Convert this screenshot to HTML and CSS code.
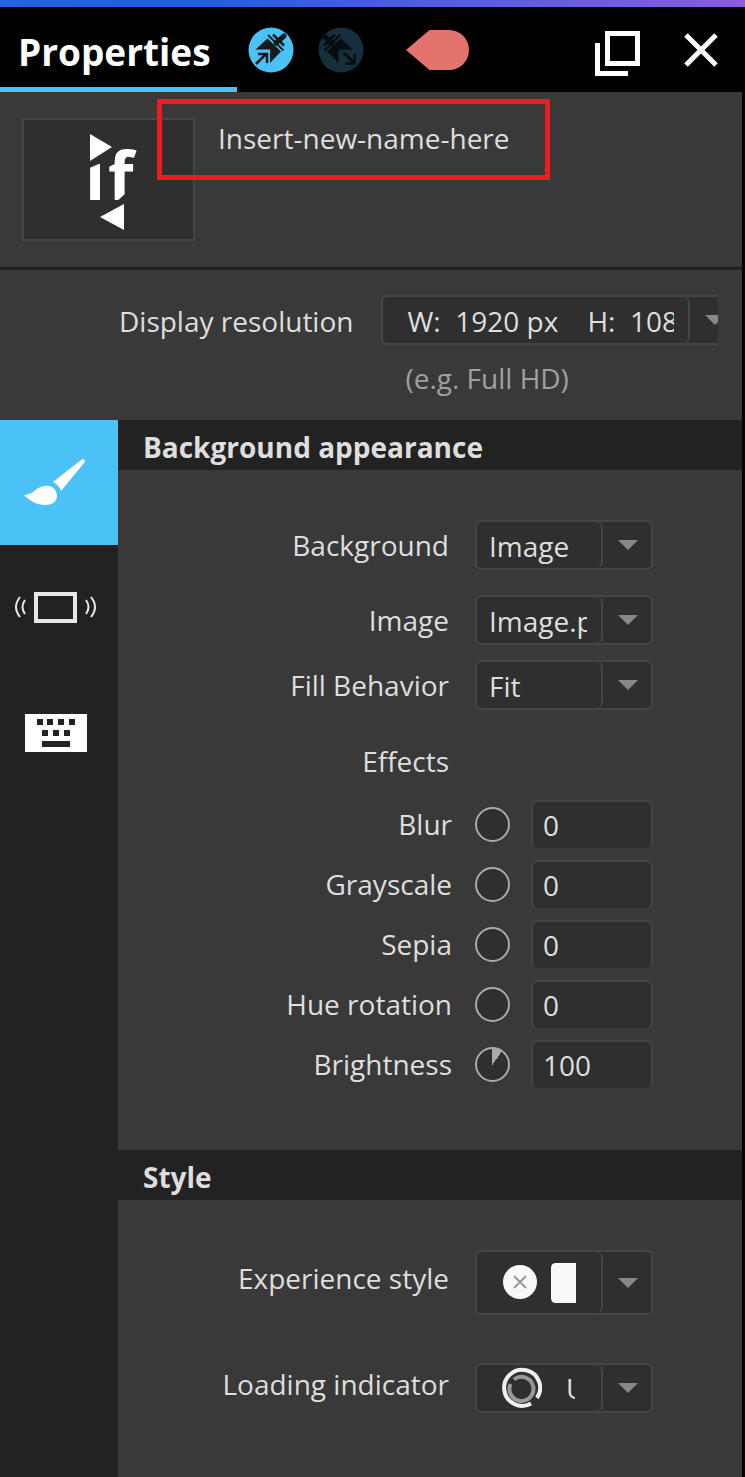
FILE: index.html
```html
<!DOCTYPE html>
<html lang="en">

<head>
    <meta charset="UTF-8">
    <meta name="viewport" content="width=device-width, initial-scale=1.0">
    <title>Properties</title>
    <link rel="stylesheet" href="styles.css">
</head>

<body>
    <header class="topbar">
        <h1 class="title">Properties</h1>
        <button class="icon-btn pin" aria-label="Pin">
            <svg width="46" height="46" viewBox="0 0 46 46">
                <circle cx="23" cy="23" r="22.5" fill="#4bc2f6" />
                <g fill="#161a1d" stroke="#161a1d">
                    <path d="M7.500 22.500L19.500 11.500L33 24.500L22 36V22.500z" stroke="none" />
                    <path d="M20 8l15.500 15.500" fill="none" stroke-width="2" />
                    <path d="M25 7.500l11 11" fill="none" stroke-width="2.500" />
                    <path d="M28 16l8-7" stroke-width="5" stroke-linecap="round" fill="none" />
                    <path d="M8 37l10-10M10 27h9v9" fill="none" stroke-width="2.500" />
                </g>
            </svg>
        </button>
        <button class="icon-btn unpin" aria-label="Unpin">
            <svg width="46" height="46" viewBox="0 0 46 46">
                <circle cx="23" cy="23" r="22.500" fill="#162f3c" />
                <g fill="#060c10" stroke="#060c10">
                    <path d="M34.500 22.500L22.500 11.500L9 24.500L20.500 36V22.500z" stroke="none" />
                    <path d="M22 8L6.500 23.500" fill="none" stroke-width="2" />
                    <path d="M17 7.500l-11 11" fill="none" stroke-width="2.500" />
                    <path d="M14 16L6 9" stroke-width="5" stroke-linecap="round" fill="none" />
                    <path d="M26 26l10 10M27 36.500h9.500V27" fill="none" stroke-width="2.500" />
                </g>
            </svg>
        </button>
        <button class="icon-btn tag" aria-label="Tag">
            <svg width="64" height="42" viewBox="0 0 64 42">
                <path d="M0 21L23.500 1H43a20 20 0 0 1 0 40H23.500z" fill="#e5736d" />
            </svg>
        </button>
        <button class="icon-btn float" aria-label="Float window">
            <svg width="46" height="46" viewBox="0 0 46 46" fill="none" stroke="#fff" stroke-width="5">
                <path d="M12.500 2.500h30v30h-30z" />
                <path d="M2.500 12v30.500H33" />
            </svg>
        </button>
        <button class="icon-btn" aria-label="Close">
            <svg width="34" height="34" viewBox="0 0 34 34" stroke="#fff" stroke-width="5">
                <path d="M2 2l30 30M32 2L2 32" />
            </svg>
        </button>
    </header>

    <main class="panel">
        <section class="identity">
            <div class="thumb">
                <svg width="60" height="106" viewBox="0 0 60 106" fill="#fff">
                    <!-- hides the dot of the i and bevels both stems -->
                    <clipPath id="cut">
                        <path d="M8 42L22 36h4V15h34v51H47L35 77H8z" />
                    </clipPath>
                    <path d="M11 7v27l22-14z" />
                    <text class="logo-text" x="6 29" y="73" clip-path="url(#cut)">if</text>
                    <path d="M45 77v26L21 90z" />
                </svg>
            </div>
            <div class="name">
                <input class="name-input" type="text" aria-label="Name" value="Insert-new-name-here">
            </div>
        </section>

        <section class="resolution">
            <label for="resolution">Display resolution</label>
            <div class="resolution-field">
                <div class="combo combo-wide">
                    <select id="resolution">
                        <option>W:&nbsp; 1920 px &nbsp;&nbsp; H:&nbsp; 1080 px</option>
                    </select>
                </div>
                <p class="hint">(e.g. Full HD)</p>
            </div>
        </section>

        <div class="columns">
            <nav class="tabs">
                <button class="tab active" aria-label="Appearance">
                    <svg width="64" height="50" viewBox="0 0 64 50" fill="#fff">
                        <path d="M0 37c10 0 12-9 21-9 7-1 12 4 12 10 0 6-5 9-12 9-8 0-15-4-21-10z" />
                        <path d="M29 24L57 2c2-2 6 0 3 3L37 33c-1-4-4-7-8-9z" />
                    </svg>
                </button>
                <button class="tab" aria-label="Display">
                    <svg width="84" height="34" viewBox="0 0 84 34" fill="none" stroke="#e8e8e8">
                        <path d="M22 3h39v27H22z" stroke-width="4" />
                        <path d="M6 6q-8 10 0 20M11 9q-5 7 0 14M77 6q8 10 0 20M72 9q5 7 0 14" stroke-width="2" />
                    </svg>
                </button>
                <button class="tab" aria-label="Keyboard">
                    <svg width="62" height="38" viewBox="0 0 62 38">
                        <path d="M0 0h62v38H0z" fill="#fff" />
                        <path d="M12 5h6v6h-6zM22 5h6v6h-6zM33 5h6v6h-6zM44 5h6v6h-6zM17 16h6v6h-6zM28 16h6v6h-6zM39 16h6v6h-6zM17 27h28v6H17z" fill="#222" />
                    </svg>
                </button>
            </nav>

            <div class="content">
                <h2>Background appearance</h2>
                <div class="group">
                    <div class="row row-first">
                        <label for="background">Background</label>
                        <div class="combo">
                            <select id="background">
                                <option>Image</option>
                            </select>
                        </div>
                    </div>
                    <div class="row">
                        <label for="image">Image</label>
                        <div class="combo">
                            <select id="image">
                                <option>Image.png</option>
                            </select>
                        </div>
                    </div>
                    <div class="row">
                        <label for="fill">Fill Behavior</label>
                        <div class="combo">
                            <select id="fill">
                                <option>Fit</option>
                            </select>
                        </div>
                    </div>

                    <h3 class="row">Effects</h3>
                    <div class="effects">
                        <div class="row effect">
                            <label for="blur">Blur</label>
                            <input class="dial" type="range" aria-label="Blur dial" value="0">
                            <input class="number" id="blur" type="text" value="0">
                        </div>
                        <div class="row effect">
                            <label for="grayscale">Grayscale</label>
                            <input class="dial" type="range" aria-label="Grayscale dial" value="0">
                            <input class="number" id="grayscale" type="text" value="0">
                        </div>
                        <div class="row effect">
                            <label for="sepia">Sepia</label>
                            <input class="dial" type="range" aria-label="Sepia dial" value="0">
                            <input class="number" id="sepia" type="text" value="0">
                        </div>
                        <div class="row effect">
                            <label for="hue">Hue rotation</label>
                            <input class="dial" type="range" aria-label="Hue rotation dial" value="0">
                            <input class="number" id="hue" type="text" value="0">
                        </div>
                        <div class="row effect">
                            <label for="brightness">Brightness</label>
                            <input class="dial" type="range" aria-label="Brightness dial" max="1000" value="100" style="--turn: 36deg">
                            <input class="number" id="brightness" type="text" value="100">
                        </div>
                    </div>
                </div>

                <h2>Style</h2>
                <div class="group group-style">
                    <div class="row">
                        <label for="experience">Experience style</label>
                        <div class="combo combo-tall">
                            <button class="picker" id="experience" aria-haspopup="listbox">
                                <svg width="74" height="42" viewBox="0 0 74 42">
                                    <circle cx="18" cy="20" r="17" fill="#f9f9f9" />
                                    <path d="M12 14l12 12M24 14L12 26" stroke="#999" stroke-width="2" />
                                    <path d="M54 1h20v40H54q-5 0-5-5V6q0-5 5-5z" fill="#f9f9f9" />
                                </svg>
                            </button>
                        </div>
                    </div>
                    <div class="row">
                        <label for="loading">Loading indicator</label>
                        <div class="combo">
                            <button class="picker" id="loading" aria-haspopup="listbox">
                                <svg width="40" height="42" viewBox="0 0 40 42" fill="none" stroke-width="4">
                                    <path d="M29 36.500A18 18 0 1 1 35 31" stroke="#f0f0f0" />
                                    <path d="M12 12.500A12 12 0 1 1 8.500 17" stroke="#999" />
                                </svg>
                                <span class="picker-text">U</span>
                            </button>
                        </div>
                    </div>
                </div>
            </div>
        </div>
    </main>
</body>

</html>
```
FILE: styles.css
```css
* {
    box-sizing: border-box;
    margin: 0;
    padding: 0;
}

body {
    display: flex;
    flex-direction: column;
    min-height: 100vh;
    background: #000;
    color: #dedede;
    font-family: "Open Sans", "Noto Sans", sans-serif;
    font-size: 28px;
    line-height: 40px;
}

button,
input,
select {
    border: none;
    background: none;
    color: inherit;
    font: inherit;
    appearance: none;
    outline: none;
}

svg {
    display: block;
}

/* top bar */
.topbar {
    display: flex;
    align-items: center;
    height: 92px;
    padding-right: 27px;
    border-top: 7px solid;
    border-image: linear-gradient(90deg, #2463e4, #1f5de5 25%, #465ce6 50%, #8b5ce2) 1;
    background: #000;
}

.title {
    align-self: stretch;
    width: 237px;
    padding-left: 18px;
    border-bottom: 5px solid #4bc2f6;
    color: #fff;
    font-size: 37px;
    line-height: 90px;
}

.icon-btn {
    flex: none;
    cursor: pointer;
}

.pin {
    margin-left: 11px;
}

.unpin {
    margin-left: 24px;
}

.tag {
    margin-left: 42px;
}

.float {
    margin-left: auto;
    margin-right: 43px;
    padding-top: 8px;
}

/* panel */
.panel {
    flex: 1;
    display: flex;
    flex-direction: column;
    border-right: 3px solid #000;
    background: #393939;
}

.identity {
    display: flex;
    gap: 23px;
    padding: 26px 22px;
    border-bottom: 3px solid #222;
}

.thumb {
    display: flex;
    align-items: center;
    justify-content: center;
    width: 173px;
    height: 123px;
    border: 2px solid #454545;
    background: #2f2f2f;
}

.logo-text {
    font-size: 66px;
    font-weight: bold;
}

.name {
    position: relative;
    align-self: flex-start;
}

.name::before {
    content: "";
    position: absolute;
    top: -19px;
    right: -9px;
    bottom: -22px;
    left: -61px;
    border: 5px solid #ed1c24;
    pointer-events: none;
}

.name-input {
    display: block;
    width: 323px;
    height: 40px;
}

.resolution {
    display: flex;
    gap: 28px;
    height: 150px;
    margin-right: 24px;
    padding: 25px 0 0 119px;
    overflow: hidden;
}

.resolution label {
    flex: none;
    line-height: 52px;
}

.resolution-field {
    flex: none;
}

.hint {
    padding-left: 24px;
    color: #a0a0a0;
    line-height: 66px;
}

.columns {
    flex: 1;
    display: flex;
}

.tabs {
    display: flex;
    flex-direction: column;
    width: 118px;
    background: #222;
}

.tab {
    display: flex;
    align-items: center;
    justify-content: center;
    height: 125px;
    padding-right: 6px;
    cursor: pointer;
}

.tab.active {
    background: #4bc2f6;
}

.content {
    flex: 1;
}

h2 {
    height: 50px;
    padding-left: 25px;
    background: #222;
    font-size: 28px;
    line-height: 54px;
}

h3 {
    font-size: 28px;
    font-weight: normal;
}

.group {
    display: flex;
    flex-direction: column;
    gap: 15px;
    padding: 50px 89px 62px 0;
}

.group-style {
    gap: 48px;
}

.group-style label {
    padding-bottom: 9px;
}

.row {
    display: grid;
    grid-template-columns: 1fr 178px;
    column-gap: 26px;
    align-items: center;
    text-align: right;
}

.row-first {
    margin-bottom: 10px;
}

h3.row {
    padding: 16px 0 4px;
}

/* drop-downs */
.combo {
    display: grid;
    height: 50px;
    border: 2px solid #454545;
    border-radius: 6px;
    background: #2f2f2f;
}

.combo::before,
.combo::after {
    content: "";
    grid-area: 1 / 1;
    pointer-events: none;
}

.combo::before {
    margin-right: 48px;
    border-right: 2px solid #454545;
    border-radius: 0 6px 6px 0;
}

.combo::after {
    place-self: center end;
    margin-right: 13px;
    border: 10px solid transparent;
    border-top-color: #878787;
    border-bottom: none;
}

.combo select,
.picker {
    grid-area: 1 / 1;
    width: 100%;
    min-width: 0;
    padding: 2px 64px 0 12px;
    overflow: hidden;
    cursor: pointer;
}

.combo-wide {
    width: 359px;
}

.combo-wide select {
    padding-left: 24px;
}

.combo-tall {
    height: 65px;
}

.picker {
    display: flex;
    align-items: center;
    padding: 0 76px 0 25px;
}

.picker svg {
    flex: none;
}

.picker-text {
    width: 33px;
    padding-left: 24px;
    overflow: hidden;
}

/* effects */
.effects {
    display: flex;
    flex-direction: column;
    gap: 12px;
}

.effect {
    grid-template-columns: 1fr 35px 122px;
    column-gap: 21px;
}

.effect label {
    padding-right: 2px;
}

.dial {
    width: 35px;
    height: 35px;
    border: 2px solid #aaa;
    border-radius: 50%;
    background: conic-gradient(#aaa var(--turn, 0deg), #2f2f2f 0deg);
}

.dial::-webkit-slider-thumb {
    appearance: none;
    width: 1px;
    height: 1px;
}

.number {
    width: 122px;
    height: 48px;
    padding-left: 10px;
    border: 2px solid #454545;
    border-bottom: none;
    border-radius: 6px;
    background: #2f2f2f;
}
```
